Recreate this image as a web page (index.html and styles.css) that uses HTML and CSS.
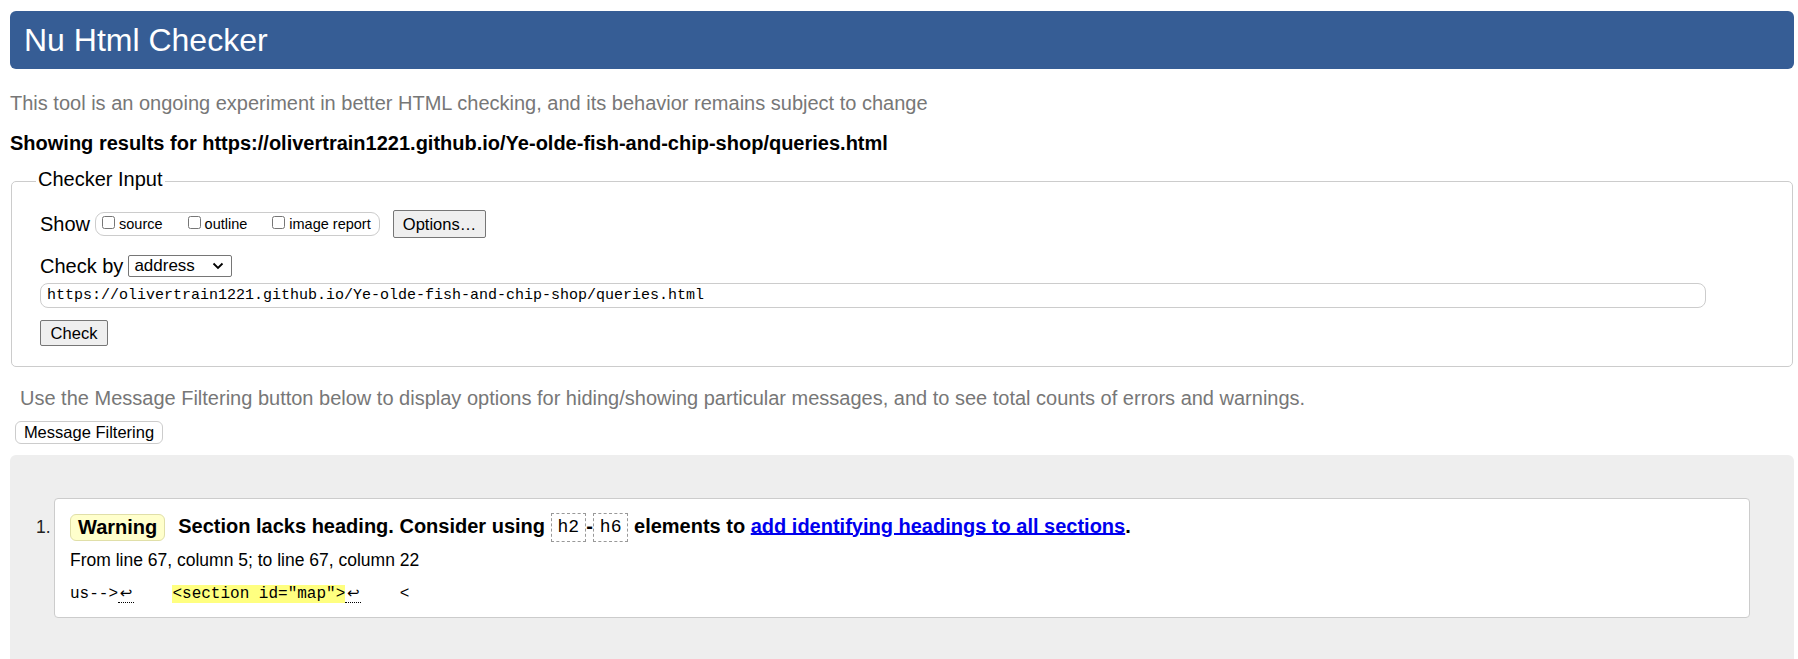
FILE: index.html
```html
<!DOCTYPE html>
<html lang="en">
<head>
<meta charset="utf-8">
<title>Showing results for https://olivertrain1221.github.io/Ye-olde-fish-and-chip-shop/queries.html - Nu Html Checker</title>
<link rel="stylesheet" href="styles.css">
</head>
<body>
<h1 class="title">Nu Html Checker</h1>
<p class="intro">This tool is an ongoing experiment in better HTML checking, and its behavior remains subject to change</p>
<p class="showing">Showing results for https://olivertrain1221.github.io/Ye-olde-fish-and-chip-shop/queries.html</p>
<form class="checker">
  <fieldset class="input-set">
    <legend class="legend">Checker Input</legend>
    <div class="row row-show">
      <span class="label">Show</span>
      <span class="show-group">
        <label class="opt"><input type="checkbox" class="cb"><span>source</span></label>
        <label class="opt"><input type="checkbox" class="cb"><span>outline</span></label>
        <label class="opt"><input type="checkbox" class="cb"><span>image report</span></label>
      </span>
      <button type="button" class="btn btn-options">Options…</button>
    </div>
    <div class="row row-check">
      <span class="label">Check by</span>
      <span class="select">address<svg class="chev" width="12" height="8" viewBox="0 0 12 8"><path d="M1.5 1.5 L6 6 L10.5 1.5" fill="none" stroke="#000" stroke-width="1.8"/></svg></span>
    </div>
    <div class="url">https://olivertrain1221.github.io/Ye-olde-fish-and-chip-shop/queries.html</div>
    <div class="row-btn"><button type="button" class="btn btn-check">Check</button></div>
  </fieldset>
</form>
<p class="filter-note">Use the Message Filtering button below to display options for hiding/showing particular messages, and to see total counts of errors and warnings.</p>
<button type="button" class="btn-filter">Message Filtering</button>
<div class="results">
  <ol class="messages">
    <li class="msg">
      <p class="msg-head"><span class="badge">Warning</span><span class="msg-text">Section lacks heading. Consider using <code class="tag">h2</code>-<code class="tag">h6</code> elements to <a class="link" href="#">add identifying headings to all sections</a>.</span></p>
      <p class="location">From line 67, column 5; to line 67, column 22</p>
      <p class="extract"><code>us--&gt;<span class="lf">↩</span>    <b class="hl">&lt;section id="map"&gt;</b><span class="lf">↩</span>    &lt;</code></p>
    </li>
  </ol>
</div>
</body>
</html>
```
FILE: styles.css
```css
html, body {
  margin: 0;
  padding: 0;
  background: #fff;
}
body {
  padding: 11px 4px 0 10px;
  font-family: "Liberation Sans", Arial, sans-serif;
  font-size: 20px;
  color: #000;
}
.title {
  margin: 0;
  height: 58px;
  padding: 0 14px;
  background: #365d95;
  color: #fff;
  border-radius: 6px;
  font-size: 32px;
  font-weight: normal;
  line-height: 58px;
}
.intro {
  margin: 14px 0 0;
  color: #777;
  line-height: 40px;
}
.showing {
  margin: 0;
  font-weight: bold;
  line-height: 40px;
}
.checker {
  margin: 0;
}
.input-set {
  margin: 6px 1px 0;
  padding: 14px 28px 20px;
  border: 1px solid #ccc;
  border-radius: 5px;
}
.legend {
  padding: 0 2px 4px;
  margin-left: -4px;
  font-size: 20px;
  line-height: 20px;
}
.row {
  display: flex;
  align-items: center;
}
.row-show {
  height: 30px;
  margin-top: 2px;
}
.label {
  font-size: 20px;
  margin-right: 5px;
}
.show-group {
  display: inline-flex;
  align-items: center;
  height: 24px;
  box-sizing: border-box;
  width: 285px;
  border: 1px solid #ccc;
  border-radius: 9px;
  padding: 0 6px 0 3px;
  font-size: 14.5px;
  margin-right: 13px;
}
.opt {
  display: inline-flex;
  align-items: center;
  margin-right: 22px;
}
.opt:last-child {
  margin-right: 0;
}
.cb {
  width: 13px;
  height: 13px;
  margin: 0 4px 4px 3px;
}
.btn {
  font-family: "Liberation Sans", Arial, sans-serif;
  font-size: 16.5px;
  background: #efefef;
  border: 1px solid #767676;
  border-radius: 2px;
  color: #000;
  padding: 0 6px;
}
.btn-options {
  width: 93px;
  height: 28px;
}
.row-check {
  margin-top: 16px;
  height: 22px;
}
.select {
  display: inline-flex;
  align-items: center;
  justify-content: space-between;
  box-sizing: border-box;
  width: 104px;
  height: 22px;
  padding: 0 7px 0 5px;
  border: 1px solid #767676;
  border-radius: 2px;
  font-size: 17px;
}
.url {
  margin-top: 6px;
  height: 25px;
  box-sizing: border-box;
  width: 1666px;
  border: 1px solid #ccc;
  border-radius: 8px;
  padding: 0 6px;
  font-family: "Liberation Mono", "Courier New", monospace;
  font-size: 15px;
  line-height: 23px;
}
.row-btn {
  margin-top: 12px;
  height: 26px;
}
.btn-check {
  width: 68px;
  height: 26px;
}
.filter-note {
  margin: 19px 0 0 10px;
  color: #777;
  line-height: 24px;
}
.btn-filter {
  display: block;
  margin: 11px 0 0 5px;
  width: 148px;
  height: 23px;
  padding: 0;
  background: #fff;
  border: 1px solid #ccc;
  border-radius: 6px;
  font-family: "Liberation Sans", Arial, sans-serif;
  font-size: 16.5px;
  color: #000;
}
.results {
  margin-top: 11px;
  background: #eee;
  border-radius: 6px 6px 0 0;
  padding: 43px 44px 45px;
}
.messages {
  margin: 0;
  padding: 0;
  list-style: none;
  counter-reset: item;
}
.msg {
  position: relative;
  background: #fff;
  border: 1px solid #ccc;
  border-radius: 4px;
  padding: 13px 15px 12px;
  counter-increment: item;
}
.msg::before {
  content: counter(item) ".";
  position: absolute;
  left: -19px;
  top: 13px;
  line-height: 30px;
  font-size: 17.5px;
  color: #222;
}
.msg-head {
  margin: 0;
  height: 30px;
  display: flex;
  align-items: center;
  font-weight: bold;
  font-size: 20px;
}
.badge {
  display: inline-block;
  padding: 0 7px;
  line-height: 25px;
  background: #ffffcc;
  border: 1px solid #e0dfa8;
  border-radius: 6px;
  margin-right: 13px;
}
.tag {
  display: inline-block;
  font-family: "Liberation Mono", "Courier New", monospace;
  font-weight: normal;
  font-size: 18px;
  line-height: 27px;
  padding: 0 6px;
  border: 1px dashed #999;
  margin: 0;
  vertical-align: middle;
}
.link {
  color: #0000ee;
}
.location {
  margin: 7px 0 0;
  font-size: 17.5px;
  line-height: 22px;
}
.extract {
  margin: 11px 0 0;
  font-size: 16px;
  line-height: 22px;
  white-space: pre;
}
.extract code {
  font-family: "Liberation Mono", "Courier New", monospace;
}
.hl {
  font-weight: normal;
  background: #ffff80;
}
.lf {
  display: inline-block;
  width: 16px;
  line-height: 18px;
  text-align: center;
  font-family: "DejaVu Sans", sans-serif;
  font-size: 15px;
  border-bottom: 1px dotted #000;
}
```
